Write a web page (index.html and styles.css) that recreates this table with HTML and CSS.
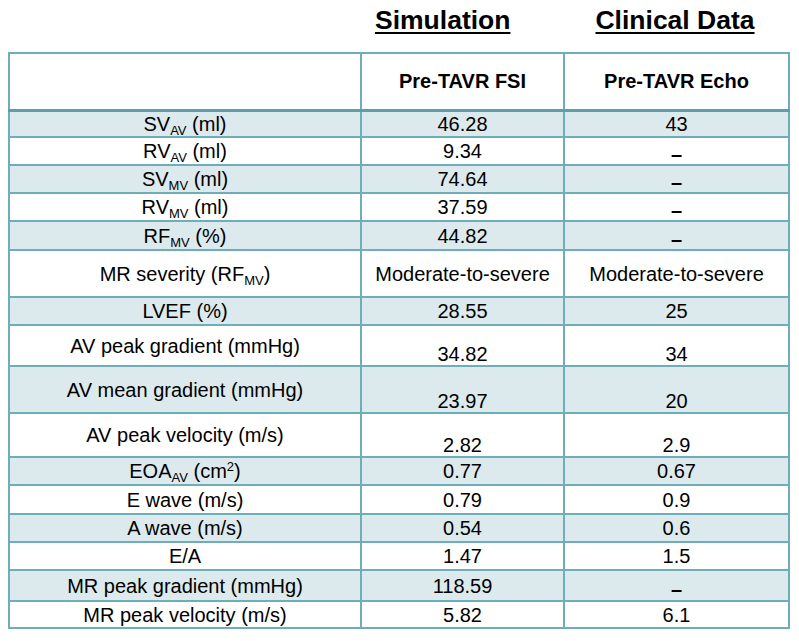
FILE: index.html
```html
<!DOCTYPE html>
<html>
<head>
<meta charset="utf-8">
<link rel="stylesheet" href="styles.css">
</head>
<body>
<div class="titles">
  <div></div>
  <div class="title sim">Simulation</div>
  <div class="title clin">Clinical Data</div>
</div>
<table class="data">
  <colgroup><col class="c1"><col class="c2"><col class="c3"></colgroup>
  <thead>
    <tr class="head"><th></th><th>Pre-TAVR FSI</th><th>Pre-TAVR Echo</th></tr>
  </thead>
  <tbody>
    <tr class="r27"><td>SV<sub>AV</sub> (ml)</td><td>46.28</td><td>43</td></tr>
    <tr class="r28"><td>RV<sub>AV</sub> (ml)</td><td>9.34</td><td class="dash">–</td></tr>
    <tr class="r28"><td>SV<sub>MV</sub> (ml)</td><td>74.64</td><td class="dash">–</td></tr>
    <tr class="r28"><td>RV<sub>MV</sub> (ml)</td><td>37.59</td><td class="dash">–</td></tr>
    <tr class="r29"><td>RF<sub>MV</sub> (%)</td><td>44.82</td><td class="dash">–</td></tr>
    <tr class="r47"><td>MR severity (RF<sub>MV</sub>)</td><td>Moderate-to-severe</td><td>Moderate-to-severe</td></tr>
    <tr class="r28"><td>LVEF (%)</td><td>28.55</td><td>25</td></tr>
    <tr class="r41 low"><td>AV peak gradient (mmHg)</td><td>34.82</td><td>34</td></tr>
    <tr class="r47 low"><td>AV mean gradient (mmHg)</td><td>23.97</td><td>20</td></tr>
    <tr class="r44 low"><td>AV peak velocity (m/s)</td><td>2.82</td><td>2.9</td></tr>
    <tr class="r28"><td>EOA<sub>AV</sub> (cm<sup>2</sup>)</td><td>0.77</td><td>0.67</td></tr>
    <tr class="r29"><td>E wave (m/s)</td><td>0.79</td><td>0.9</td></tr>
    <tr class="r28"><td>A wave (m/s)</td><td>0.54</td><td>0.6</td></tr>
    <tr class="r28"><td>E/A</td><td>1.47</td><td>1.5</td></tr>
    <tr class="r31"><td>MR peak gradient (mmHg)</td><td>118.59</td><td class="dash">–</td></tr>
    <tr class="r27"><td>MR peak velocity (m/s)</td><td>5.82</td><td>6.1</td></tr>
  </tbody>
</table>
</body>
</html>
```
FILE: styles.css
```css
html, body {
  margin: 0;
  padding: 0;
  background: #ffffff;
}
body {
  font-family: "Liberation Sans", Arial, sans-serif;
  color: #000;
  width: 799px;
  height: 641px;
  overflow: hidden;
}
.titles {
  display: grid;
  grid-template-columns: 352px 203px 224px;
  margin-left: 8px;
  height: 52px;
  box-sizing: border-box;
  padding-top: 5px;
}
.title {
  font-weight: bold;
  font-size: 26.5px;
  line-height: 30px;
  text-decoration: underline;
  text-decoration-thickness: 2px;
  text-underline-offset: 3px;
  white-space: nowrap;
}
.sim {
  padding-left: 15px;
}
.clin {
  text-align: center;
}
.data {
  border-collapse: collapse;
  margin-left: 8px;
  table-layout: fixed;
  width: 780px;
}
.c1 { width: 352px; }
.c2 { width: 203px; }
.c3 { width: 225px; }
.data th, .data td {
  border: 2px solid #6eaeba;
  padding: 0;
  text-align: center;
  vertical-align: middle;
  font-size: 20px;
  line-height: 22px;
  white-space: nowrap;
}
.data th {
  font-weight: bold;
  font-size: 20px;
}
.head {
  height: 57px;
}
.head th {
  border-bottom: 3px solid #5a9fab;
}
.data tbody tr:nth-child(odd) {
  background: #ddeaed;
}
.r27 { height: 27px; }
.r28 { height: 28px; }
.r29 { height: 29px; }
.r31 { height: 31px; }
.r41 { height: 41px; }
.r44 { height: 44px; }
.r47 { height: 47px; }
.low td + td {
  vertical-align: bottom;
}
.data td.dash {
  font-weight: bold;
  line-height: 16px;
  padding-top: 6px;
}
sub {
  font-size: 0.65em;
  vertical-align: -0.28em;
  line-height: 0;
}
sup {
  font-size: 0.65em;
  vertical-align: 0.55em;
  line-height: 0;
}
```
